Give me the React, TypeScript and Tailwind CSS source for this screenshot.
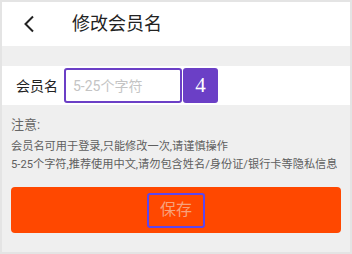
import React from "react";

const cjk = "font-['Roboto','Noto_Sans_CJK_SC',sans-serif]";

export default function App() {
  return (
    <div className={`w-[352px] h-[254px] border-2 border-[#e4e4e4] bg-[#efefef] flex flex-col ${cjk}`}>
      {/* header */}
      <div className="h-[44px] bg-white flex items-center shrink-0">
        <svg width="12" height="18" viewBox="0 0 12 18" className="ml-[21px]">
          <path d="M10 1.5 L2.5 9 L10 16.5" fill="none" stroke="#222" strokeWidth="2" />
        </svg>
        <span className="ml-[37px] text-[18px] text-[#222] leading-none">修改会员名</span>
      </div>

      {/* name row */}
      <div className="mt-[20px] h-[39px] bg-white flex items-center shrink-0">
        <span className="ml-[14px] text-[14px] text-[#222] leading-none">会员名</span>
        <div className="ml-[6px] w-[118px] h-[35px] border-2 border-[#6b3fc6] rounded-[3px] flex items-center pl-[7px]">
          <span className="text-[14px] text-[#c4c4c4] leading-none">5-25个字符</span>
        </div>
        <div className="ml-[1px] w-[35px] h-[35px] bg-[#6b3fc6] rounded-[3px] flex items-center justify-center text-white text-[21px] font-['Liberation_Serif',serif] leading-none">
          4
        </div>
      </div>

      {/* notes */}
      <div className="pl-[9px] pt-[12px] text-[#5e5e5e]">
        <div className="text-[13px] leading-[16px] text-[#666]">注意:</div>
        <div className="mt-[5px] text-[11.2px] leading-[18px]">会员名可用于登录,只能修改一次,请谨慎操作</div>
        <div className="text-[11.2px] leading-[18px]">5-25个字符,推荐使用中文,请勿包含姓名/身份证/银行卡等隐私信息</div>
      </div>

      {/* save button */}
      <div className="mt-[13px] mx-[9px] h-[46px] bg-[#ff4800] rounded-[4px] flex items-center justify-center">
        <div className="w-[58px] h-[35px] border-2 border-[#5a46f0] rounded-[3px] flex items-center justify-center">
          <span className="text-[16px] text-[#f7a27c] leading-none">保存</span>
        </div>
      </div>
    </div>
  );
}
